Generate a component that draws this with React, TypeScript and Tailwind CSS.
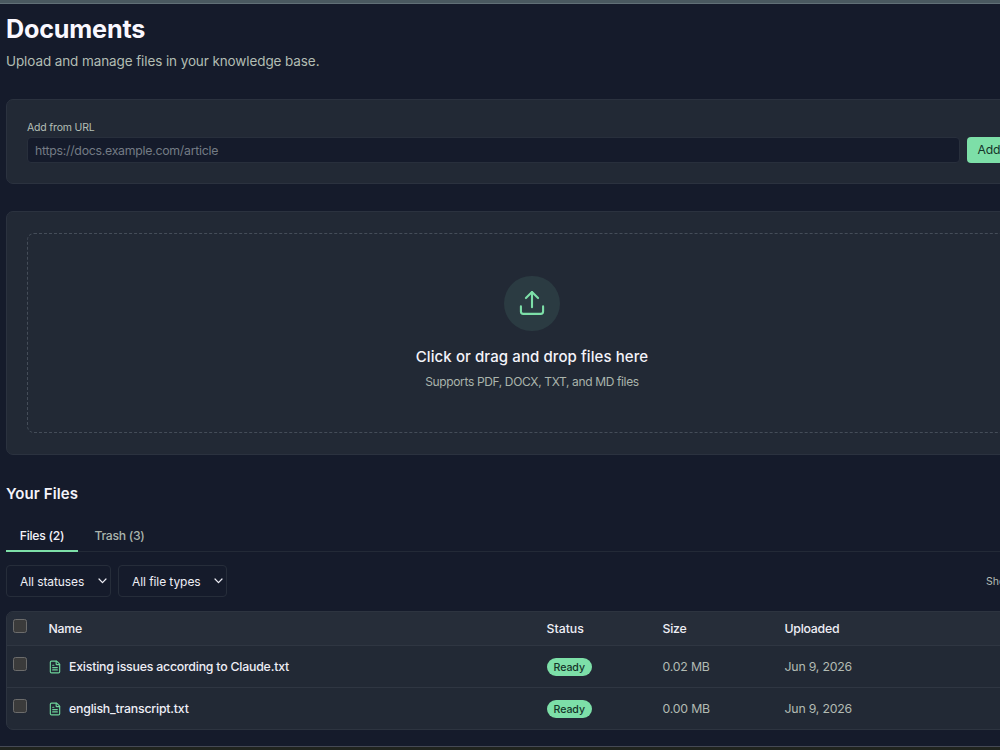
import React from "react";
import { FileText } from "lucide-react";

type FileRow = {
  name: string;
  status: string;
  size: string;
  uploaded: string;
};

const files: FileRow[] = [
  {
    name: "Existing issues according to Claude.txt",
    status: "Ready",
    size: "0.02 MB",
    uploaded: "Jun 9, 2026",
  },
  {
    name: "english_transcript.txt",
    status: "Ready",
    size: "0.00 MB",
    uploaded: "Jun 9, 2026",
  },
];

const columns = "grid grid-cols-[41.5px_498px_116px_122px_1fr]";

function Checkbox() {
  return (
    <span
      role="checkbox"
      aria-checked="false"
      className="ml-[6px] block size-[14px] rounded-[2.5px] border border-[#6c6c6c] bg-[#3b3b3b]"
    />
  );
}

function UploadIcon() {
  return (
    <svg
      className="size-7 text-[#7ddfa8]"
      viewBox="0 0 24 24"
      fill="none"
      stroke="currentColor"
      strokeWidth="1.8"
      strokeLinecap="round"
      strokeLinejoin="round"
    >
      <path d="M2.5 14.9v4.4a2 2 0 0 0 2 2h15a2 2 0 0 0 2-2v-4.4" />
      <path d="M12 15.7V2.7" />
      <path d="m6.8 7.8 5.2-5.2 5.2 5.2" />
    </svg>
  );
}

function Select({ label, className }: { label: string; className: string }) {
  return (
    <button
      className={`flex h-8 items-center justify-between rounded-[4px] border border-[#262d3a] pl-[13px] pr-[3px] text-[12px] tracking-[-0.08px] text-[#eeeef5] ${className}`}
    >
      <span className="pt-[2px] whitespace-nowrap">{label}</span>
      <svg
        className="h-[6px] w-[9px]"
        viewBox="0 0 9 6"
        fill="none"
        stroke="currentColor"
        strokeWidth="1.2"
        strokeLinecap="round"
        strokeLinejoin="round"
      >
        <path d="m1 1 3.5 3.7L8 1" />
      </svg>
    </button>
  );
}

function UrlForm() {
  return (
    <section className="mt-[27px] h-[85px] rounded-[7px] border border-[#2b323f] bg-[#222935] px-[20px] pt-[21px]">
      <label className="block text-[10.5px] leading-[14px] tracking-[-0.18px] text-[#b4bfb5]">
        Add from URL
      </label>
      <div className="mt-[2px] flex items-center gap-[7px]">
        <input
          className="h-[26px] w-[933px] rounded-[4px] border border-[#282f3c] bg-[#151b2b] px-[7px] text-[12.3px] tracking-[-0.26px] placeholder:text-[#747b85]"
          placeholder="https://docs.example.com/article"
        />
        <button className="h-[26px] flex-1 rounded-[4px] bg-[#7ddfa8] pl-[10.5px] text-left text-[12.2px] tracking-[-0.2px] text-[#15352a]">
          Add URL
        </button>
      </div>
    </section>
  );
}

function Dropzone() {
  return (
    <section className="mt-[27px] h-[243.5px] rounded-[7px] border border-[#2b323f] bg-[#222935] px-[20px] pt-[21px]">
      <div className="flex h-[199.5px] flex-col items-center rounded-[7px] border border-dashed border-[#454d59] pt-[41.5px]">
        <div className="flex size-[55.5px] items-center justify-center rounded-full bg-[#2b3b42]">
          <UploadIcon />
        </div>
        <p className="mt-[15px] text-[15px] leading-[22px] font-medium tracking-[0.09px] text-[#f4f3fa]">
          Click or drag and drop files here
        </p>
        <p className="mt-[5px] text-[12px] leading-[18px] tracking-[-0.36px] text-[#aab4ac]">
          Supports PDF, DOCX, TXT, and MD files
        </p>
      </div>
    </section>
  );
}

function FilesTable() {
  return (
    <div className="mt-[14px] overflow-hidden rounded-[7px] border border-[#2d3440] bg-[#222935] text-[12.3px]">
      <div
        className={`${columns} h-[34px] border-b border-[#2f3642] bg-[#262d39] font-medium tracking-[-0.25px] text-[#eeeef5]`}
      >
        <div className="pt-[7px]">
          <Checkbox />
        </div>
        <span className="leading-[34px]">Name</span>
        <span className="leading-[34px] tracking-normal">Status</span>
        <span className="leading-[34px]">Size</span>
        <span className="leading-[34px]">Uploaded</span>
      </div>
      {files.map((file) => (
        <div
          key={file.name}
          className={`${columns} h-[42px] border-b border-[#2f3642] tracking-[-0.2px] text-[#b2bbb3] last:h-[41px] last:border-b-0`}
        >
          <div className="pt-[11px]">
            <Checkbox />
          </div>
          <div className="flex items-center gap-[7px] font-medium tracking-[-0.2px] text-[#eeeef5]">
            <FileText className="-ml-[0.5px] size-[14px] text-[#6dd39a]" strokeWidth={2} />
            <span>{file.name}</span>
          </div>
          <div className="flex items-center">
            <span className="flex h-[18px] w-[45.5px] items-center justify-center rounded-full bg-[#7ddfa8] pt-px text-[10.6px] font-medium tracking-[-0.1px] text-[#15352a]">
              {file.status}
            </span>
          </div>
          <span className="leading-[42px]">{file.size}</span>
          <span className="leading-[42px]">{file.uploaded}</span>
        </div>
      ))}
    </div>
  );
}

export default function App() {
  return (
    <div className="flex h-[750px] w-[1000px] flex-col overflow-hidden bg-[#151b2b] font-['Inter','Liberation_Sans',sans-serif]">
      <div className="h-1 shrink-0 border-b border-[#617077] bg-[#4a5960]" />
      <main className="ml-[6px] h-[742px] w-[1052px] shrink-0">
        <h1 className="pt-[9px] text-[25.2px] leading-[32px] font-bold tracking-[-0.2px] text-[#faf8ff]">
          Documents
        </h1>
        <p className="mt-[5px] text-[13.5px] leading-[22px] tracking-[-0.1px] text-[#b2bdb3]">
          Upload and manage files in your knowledge base.
        </p>
        <UrlForm />
        <Dropzone />
        <h2 className="mt-[27.5px] text-[15px] leading-[24px] font-semibold tracking-[0.1px] text-[#f4f3fa]">
          Your Files
        </h2>
        <div className="mt-[13px] flex h-[33px] border-b border-[#232a37] text-[12.2px] font-medium tracking-[-0.28px]">
          <button className="h-[33px] w-[72px] border-b-2 border-[#7ddfa8] pt-[4px] text-[#f4f3fa]">
            Files (2)
          </button>
          <button className="h-[33px] w-[83px] pt-[2px] text-[#aab4ac]">
            Trash (3)
          </button>
        </div>
        <div className="mt-[13px] flex items-center gap-[7px]">
          <Select label="All statuses" className="w-[105px]" />
          <Select label="All file types" className="w-[109px]" />
          <span className="ml-auto w-[72px] whitespace-nowrap pt-[2px] text-[10.6px] text-[#b2bbb3]">
            Showing 2 of 2
          </span>
        </div>
        <FilesTable />
      </main>
      <div className="h-1 shrink-0 border-t border-[#454955] bg-[#20241f]" />
    </div>
  );
}
